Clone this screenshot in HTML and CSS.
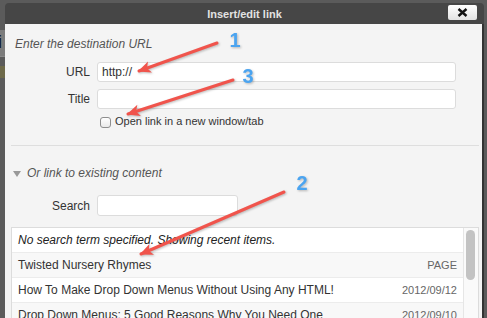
FILE: index.html
```html
<!DOCTYPE html>
<html lang="en">
<head>
  <meta charset="UTF-8" />
  <title>Insert/edit link</title>
  <link rel="stylesheet" href="styles.css">
</head>
<body>
  <div class="screen">
    <div class="backdrop-left">
      <span class="peek peek-text">i</span>
      <span class="peek peek-gold"></span>
    </div>

    <div class="dialog">
      <div class="titlebar">
        <span class="title">Insert/edit link</span>
        <button class="close" type="button" aria-label="Close">
          <svg width="11" height="9" viewBox="0 0 11 9">
            <path d="M1.5 1 L9.5 8 M9.5 1 L1.5 8" stroke="#111" stroke-width="2.4" fill="none"/>
          </svg>
        </button>
      </div>

      <div class="dialog-body">
        <p class="hint">Enter the destination URL</p>

        <div class="field-row url-row">
          <label class="field-label">URL</label>
          <input class="field" type="text" value="http://">
        </div>

        <div class="field-row title-row">
          <label class="field-label">Title</label>
          <input class="field" type="text">
        </div>

        <div class="check-row">
          <input class="check" type="checkbox">
          <span>Open link in a new window/tab</span>
        </div>

        <div class="divider"></div>

        <div class="toggle">
          <span class="toggle-arrow"></span>
          <span>Or link to existing content</span>
        </div>

        <div class="field-row search-row">
          <label class="field-label">Search</label>
          <input class="field field-search" type="text">
        </div>

        <div class="results">
          <ul class="result-list">
            <li class="result notice">No search term specified. Showing recent items.</li>
            <li class="result alt"><span>Twisted Nursery Rhymes</span><span class="info">PAGE</span></li>
            <li class="result"><span>How To Make Drop Down Menus Without Using Any HTML!</span><span class="info">2012/09/12</span></li>
            <li class="result alt"><span>Drop Down Menus: 5 Good Reasons Why You Need One</span><span class="info">2012/09/10</span></li>
          </ul>
          <div class="scrollbar"><div class="thumb"></div></div>
        </div>
      </div>
    </div>

    <div class="backdrop-right"></div>

    <!-- annotation arrows drawn over the screenshot -->
    <svg class="callouts" width="487" height="318" viewBox="0 0 487 318">
      <defs>
        <marker id="head" viewBox="0 0 10 10" refX="9" refY="5" markerUnits="userSpaceOnUse" markerWidth="15" markerHeight="13" orient="auto">
          <path d="M0 0.5 L10 5 L0 9.5 L2.5 5 Z" fill="#f0544c"/>
        </marker>
      </defs>
      <g class="arrow-lines">
        <line x1="217" y1="43" x2="139" y2="71" marker-end="url(#head)"/>
        <line x1="233" y1="80" x2="128" y2="114" marker-end="url(#head)"/>
        <line x1="284" y1="192" x2="141" y2="254" marker-end="url(#head)"/>
      </g>
      <g class="arrow-nums">
        <text x="235" y="47">1</text>
        <text x="302" y="190">2</text>
        <text x="248" y="83">3</text>
      </g>
    </svg>
  </div>
</body>
</html>
```

FILE: styles.css
```css
html, body {
  margin: 0;
  height: 318px;
  overflow: hidden;
}

body {
  background-color: #5b5b5b;
  font-family: "Liberation Sans", Arial, sans-serif;
  color: #333;
}

.screen {
  position: relative;
  display: flex;
  height: 315px;
  padding-top: 3px;
}

.backdrop-left {
  width: 5px;
  display: flex;
  flex-direction: column;
  overflow: hidden;
}

.peek {
  display: block;
}

.peek-text {
  margin-top: 27px;
  height: 26px;
  background-color: #7c7c7c;
  border-bottom: 1px solid #8a8a8a;
  font-size: 18px;
  line-height: 24px;
  color: #111;
  text-indent: -2px;
}

.peek-gold {
  margin-top: 9px;
  height: 12px;
  background-color: #6e6a4a;
}

.dialog {
  width: 479px;
  display: flex;
  flex-direction: column;
  border-radius: 4px 4px 0 0;
  overflow: hidden;
}

.titlebar {
  height: 21px;
  background-color: #464646;
  display: grid;
  grid-template-columns: 36px 1fr 36px;
  align-items: center;
}

.title {
  grid-column: 2;
  text-align: center;
  color: #e2e2e2;
  font-size: 11px;
  font-weight: bold;
}

.close {
  align-self: start;
  width: 29px;
  height: 15px;
  margin-top: 2px;
  padding: 0;
  border: none;
  border-radius: 2px;
  background: linear-gradient(#ffffff, #e2e2e2);
  display: flex;
  align-items: center;
  justify-content: center;
}

.dialog-body {
  flex: 1;
  display: flex;
  flex-direction: column;
  min-height: 0;
  background-color: #f4f4f4;
  border-right: 2px solid #333;
  padding: 0 3px 0 6px;
}

.hint {
  margin: 12px 0 0 4px;
  font-size: 12px;
  line-height: 16px;
  font-style: italic;
  color: #555;
}

.field-row {
  display: flex;
  align-items: center;
  gap: 7px;
}

.url-row {
  margin-top: 10px;
}

.title-row {
  margin-top: 7px;
}

.search-row {
  margin-top: 14px;
}

.field-label {
  width: 79px;
  text-align: right;
  font-size: 12px;
}

.field {
  width: 359px;
  height: 20px;
  box-sizing: border-box;
  margin: 0;
  padding: 0 4px;
  border: 1px solid #dcdcdc;
  border-radius: 3px;
  background-color: #fff;
  font-family: "Liberation Sans", Arial, sans-serif;
  font-size: 12px;
  color: #333;
}

.field-search {
  width: 141px;
  height: 21px;
}

.check-row {
  display: flex;
  align-items: center;
  margin-top: 4px;
  padding-left: 89px;
  height: 16px;
  font-size: 11px;
}

.check {
  appearance: none;
  width: 11px;
  height: 11px;
  margin: 3px 4px 0 0;
  border: 1px solid #8e8e8e;
  border-radius: 3px;
  background: linear-gradient(#fff, #e9e9e9);
}

.divider {
  margin-top: 16px;
  border-top: 1px solid #dedede;
}

.toggle {
  display: flex;
  align-items: center;
  margin-top: 19px;
  height: 16px;
  font-size: 12px;
  font-style: italic;
  color: #555;
}

.toggle-arrow {
  width: 0;
  height: 0;
  margin: 1px 6px 0 2px;
  border-left: 4px solid transparent;
  border-right: 4px solid transparent;
  border-top: 6px solid #999;
}

.results {
  flex: 1;
  min-height: 0;
  display: flex;
  margin-top: 11px;
  border: 1px solid #dcdcdc;
  border-bottom: none;
  background-color: #fff;
}

.result-list {
  flex: 1;
  margin: 0;
  padding: 0;
  list-style: none;
}

.result {
  display: flex;
  justify-content: space-between;
  align-items: center;
  height: 24px;
  padding: 0 6px;
  border-bottom: 1px solid #ececec;
  font-size: 12px;
  white-space: nowrap;
  overflow: hidden;
}

.result.alt {
  background-color: #f8f8f8;
}

.notice {
  font-style: italic;
  color: #222;
}

.info {
  font-size: 11px;
  color: #666;
}

.scrollbar {
  width: 14px;
  border-left: 1px solid #e6e6e6;
  background-color: #fafafa;
}

.thumb {
  width: 9px;
  height: 50px;
  margin: 2px 0 0 2px;
  border-radius: 5px;
  background-color: #c3c3c3;
}

.backdrop-right {
  flex: 1;
}

.callouts {
  position: absolute;
  top: 0;
  left: 0;
  pointer-events: none;
  filter: drop-shadow(1px 1px 1px rgba(0,0,0,0.25));
}

.arrow-lines line {
  stroke: #f0544c;
  stroke-width: 3;
  stroke-linecap: round;
}

.arrow-nums text {
  font-family: "Liberation Sans", Arial, sans-serif;
  font-size: 20px;
  font-weight: bold;
  fill: #4ba4f0;
  text-anchor: middle;
}
```
